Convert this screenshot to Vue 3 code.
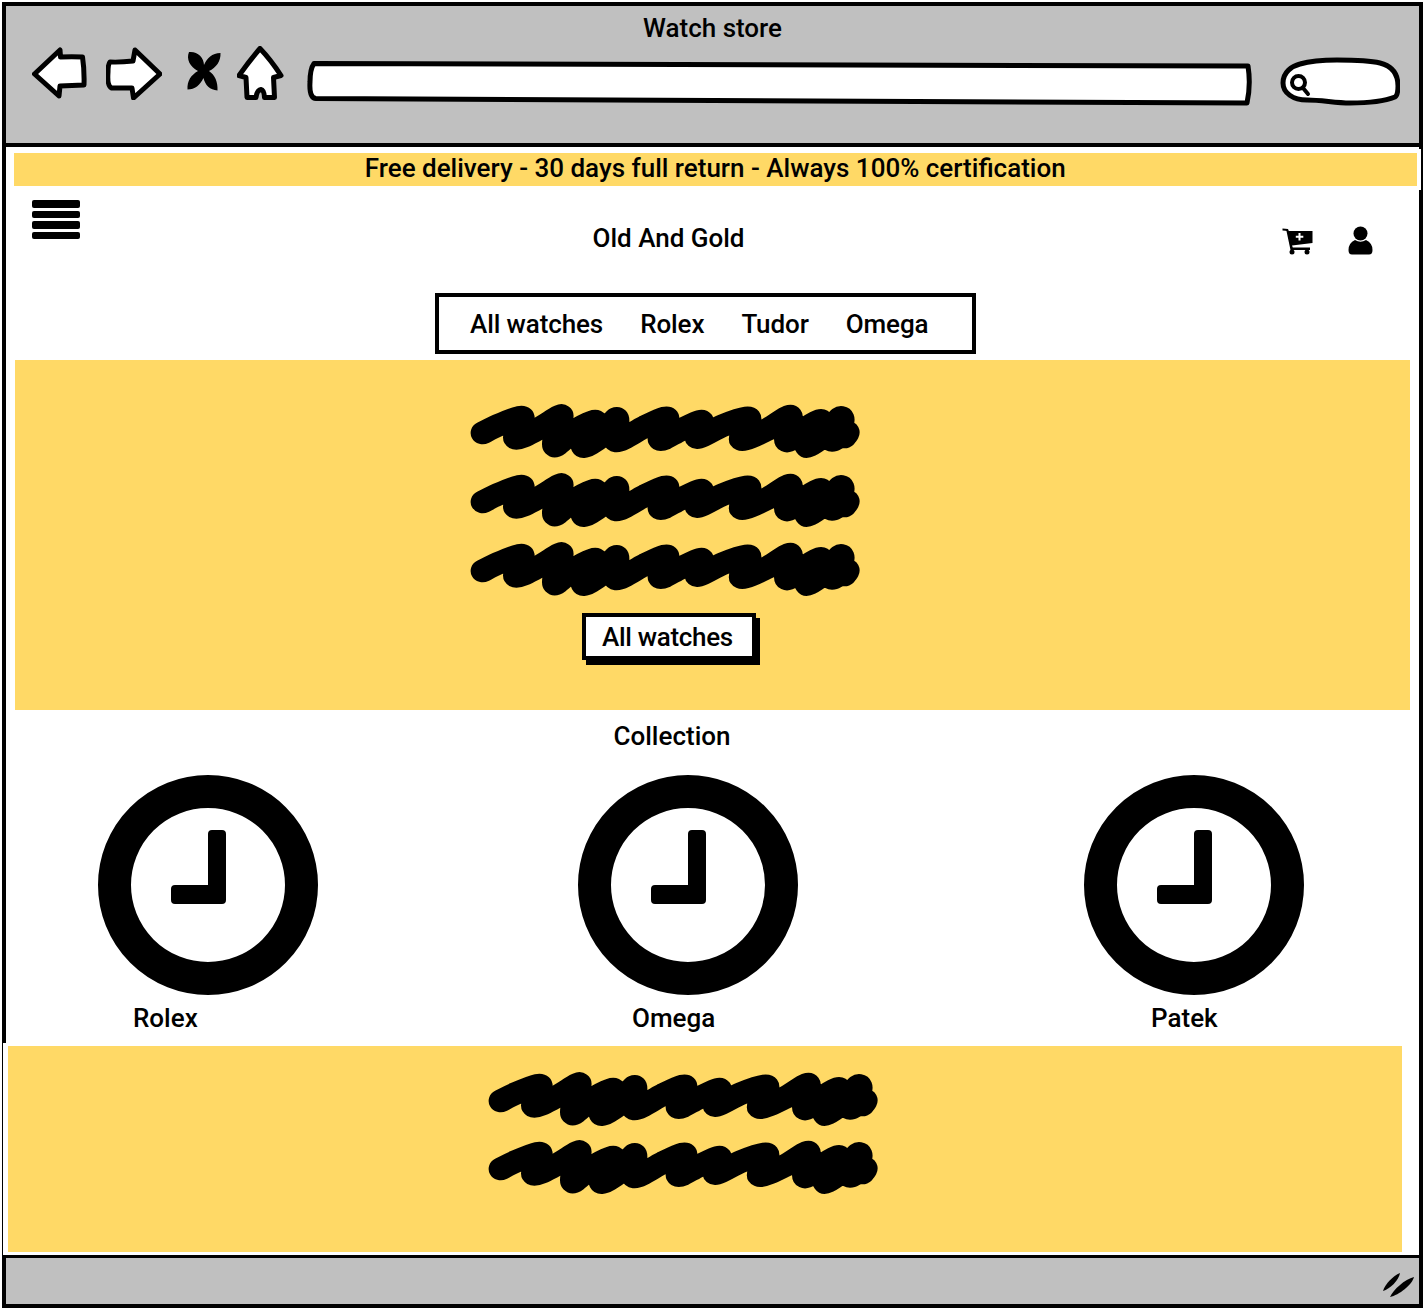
<template>
  <div class="window">
    <header class="titlebar">
      <p class="title">Watch store</p>
      <div class="toolbar">
        <svg class="tool back" viewBox="32 47 55 52">
          <path class="ink" d="M34.500 74 L60 50 L60.500 57 Q72 56.500 82.500 57 Q84.500 70 84 85 L60 86 L59 96 Z" />
        </svg>
        <svg class="tool forward" viewBox="106 47 56 53">
          <path class="ink" d="M110 62 Q120 62.500 133 61 L135 50 L160 74 L133.500 98 L132 88 L111.500 88 Q107 86 108 72 Q108 64 110 62 Z" />
        </svg>
        <svg class="tool close" viewBox="186 50 36 41">
          <path d="M189 52 C197 51 204 57 204 65 C207 58 212 53 220.500 53 C221 61 216 68 209 71 C215 75 218 82 217.500 90.500 C210 90 205 85 203.500 78 C200 85 195 89.500 187.500 89.500 C187 81 191 75 198 71 C190 67 186 59 189 52 Z" />
        </svg>
        <svg class="tool home" viewBox="237 46 47 54">
          <path class="ink" d="M260 48.500 Q271 60 281 75.500 L273.500 77.500 L274.500 97.500 L264.500 97.500 Q264 90 261 89.500 Q257 90 256 97.500 L247 97.500 L246 77.500 L239 75.500 Q250 60 260 48.500 Z" />
        </svg>
        <svg class="address" viewBox="307 60 946 46">
          <path class="ink" d="M314 63.500 L1248 66 Q1251 85 1247 103 L316 98.500 Q309 98 310 82 Q310 69 314 63.500 Z" />
        </svg>
        <svg class="search" viewBox="1280 57 120 50">
          <path class="ink" d="M1283 83 C1283 72 1292 66 1300 64 C1312 60.500 1325 60 1337 60 C1355 60 1368 60 1380 63 C1392 66 1398 74 1398 86 Q1398 95 1395 97 C1385 101 1370 103 1350 103 C1335 103 1322 100 1307 100 C1293 100 1283 93 1283 83 Z" />
          <circle class="lens" cx="1298.500" cy="82.500" r="6.500" />
          <path class="lens" d="M1303 88 L1308 94" />
        </svg>
      </div>
    </header>

    <main class="page">
      <div class="promo">Free delivery - 30 days full return - Always 100% certification</div>

      <div class="shop-head">
        <div class="burger">
          <span v-for="n in 4" :key="n"></span>
        </div>
        <p class="brand">Old And Gold</p>
        <svg class="cart" viewBox="1283 228 31 27">
          <path d="M1283.500 228.500 L1289 229 L1289.800 231 L1313.500 231 L1313.500 243 L1293 245.500 L1293.800 247.500 L1311 247.500 L1311 250 L1291.500 250 L1287.500 231 Q1287.500 230.500 1283.500 230.500 Z" />
          <circle cx="1293" cy="252" r="2.500" />
          <circle cx="1308" cy="252" r="2.500" />
          <path class="plus" d="M1300.500 233 L1300.500 240.500 M1296.800 236.800 L1304.300 236.800" />
        </svg>
        <svg class="user" viewBox="1349 226 25 29">
          <circle cx="1361.500" cy="233.500" r="7" />
          <path d="M1356 240 Q1361.500 243.500 1367 240 Q1373.500 243 1373.500 250 Q1373.500 254.500 1370 254.500 L1353 254.500 Q1349.500 254.500 1349.500 250 Q1349.500 243 1356 240 Z" />
        </svg>
      </div>

      <nav class="menu">
        <a v-for="item in menu" :key="item">{{ item }}</a>
      </nav>

      <section class="hero">
        <svg v-for="n in 3" :key="n" class="scribble" viewBox="115 375 1085 158" preserveAspectRatio="none">
          <path :d="scribblePath" />
        </svg>
        <button class="hero-btn">All watches</button>
      </section>

      <h2 class="collection-title">Collection</h2>
      <div class="collection">
        <div v-for="watch in watches" :key="watch.name" class="watch" :class="watch.cls">
          <svg class="clock" viewBox="0 0 220 220">
            <circle class="dial" cx="110" cy="110" r="93.500" />
            <path d="M114 55 L124 55 Q128 55 128 59 L128 125 Q128 129 124 129 L77 129 Q73 129 73 125 L73 114 Q73 110 77 110 L110 110 L110 59 Q110 55 114 55 Z" />
          </svg>
          <span class="watch-name">{{ watch.name }}</span>
        </div>
      </div>

      <section class="footer-band">
        <svg v-for="n in 2" :key="n" class="scribble" viewBox="115 375 1085 158" preserveAspectRatio="none">
          <path :d="scribblePath" />
        </svg>
      </section>
    </main>

    <footer class="statusbar">
      <svg class="grip" viewBox="1382 1272 33 26">
        <path d="M1383 1291 C1385 1284 1393 1276 1400 1273 C1399 1280 1390 1289 1383 1291 Z" />
        <path d="M1390 1297 C1393 1290 1405 1279 1414 1277 C1412 1285 1399 1295 1390 1297 Z" />
      </svg>
    </footer>
  </div>
</template>

<script setup>
const menu = ['All watches', 'Rolex', 'Tudor', 'Omega']

const watches = [
  { name: 'Rolex', cls: 'rolex' },
  { name: 'Omega', cls: 'omega' },
  { name: 'Patek', cls: 'patek' },
]

// pen line of the scribble placeholder, zigzag with a thick round stroke
const scribblePts = [
  [148, 458], [190, 436], [250, 412], [258, 422], [240, 474], [300, 448], [360, 410], [366, 418], [348, 496],
  [400, 455], [452, 426], [462, 432], [428, 498], [480, 468], [518, 418], [524, 428], [522, 482], [600, 440],
  [656, 414], [662, 424], [644, 478], [700, 450], [754, 424], [760, 434], [748, 472], [820, 436], [884, 414],
  [892, 426], [872, 478], [940, 450], [1002, 410], [1008, 424], [998, 482], [1050, 445], [1088, 422], [1092, 434],
  [1054, 498], [1110, 460], [1146, 414], [1152, 428], [1124, 480], [1166, 456], [1160, 470],
]

const smooth = (pts) => {
  let d = `M${pts[0][0]} ${pts[0][1]}`
  for (let i = 0; i < pts.length - 1; i++) {
    const p0 = pts[Math.max(i - 1, 0)]
    const p1 = pts[i]
    const p2 = pts[i + 1]
    const p3 = pts[Math.min(i + 2, pts.length - 1)]
    const c1 = [p1[0] + (p2[0] - p0[0]) / 6, p1[1] + (p2[1] - p0[1]) / 6]
    const c2 = [p2[0] - (p3[0] - p1[0]) / 6, p2[1] - (p3[1] - p1[1]) / 6]
    d += ` C${c1[0]} ${c1[1]} ${c2[0]} ${c2[1]} ${p2[0]} ${p2[1]}`
  }
  return d
}

const scribblePath = smooth(scribblePts)
</script>

<style>
html,
body {
  margin: 0;
  background: #fff;
}
</style>

<style scoped>
.window {
  box-sizing: border-box;
  display: flex;
  flex-direction: column;
  width: 1421px;
  height: 1306px;
  margin: 2px 0 0 2px;
  border: 4px solid #000;
  font-family: Roboto, "Liberation Sans", sans-serif;
  font-size: 26px;
  font-weight: 500;
  color: #000;
}

.titlebar {
  box-sizing: border-box;
  height: 141px;
  flex: none;
  background: #c0c0c0;
  border-bottom: 4px solid #000;
}

.title {
  margin: 6px 0 0;
  height: 32px;
  line-height: 32px;
  text-align: center;
}

.toolbar {
  display: flex;
  align-items: flex-start;
  padding: 3px 0 0 26px;
}

.tool {
  flex: none;
}

.back {
  width: 55px;
  height: 52px;
}

.forward {
  width: 56px;
  height: 53px;
  margin-left: 19px;
}

.close {
  width: 36px;
  height: 41px;
  margin: 3px 0 0 24px;
}

.home {
  width: 47px;
  height: 54px;
  margin: -1px 0 0 15px;
}

.address {
  width: 946px;
  height: 46px;
  margin: 13px 0 0 23px;
  flex: none;
}

.search {
  width: 120px;
  height: 50px;
  margin: 10px 0 0 27px;
  flex: none;
}

.ink {
  fill: #fff;
  stroke: #000;
  stroke-width: 5;
  stroke-linejoin: round;
}

.lens {
  fill: none;
  stroke: #000;
  stroke-width: 4;
  stroke-linecap: round;
}

.page {
  flex: 1;
  min-height: 0;
  background: #fff;
}

.promo {
  position: relative;
  height: 33px;
  margin: 6px 2px 0 7.5px;
  line-height: 30px;
  text-align: center;
  background: #ffd966;
  box-shadow: 0 0 0 4px #fff;
}

.shop-head {
  display: flex;
  align-items: flex-start;
  height: 107px;
  padding: 0 46px 0 26px;
}

.burger {
  display: flex;
  flex-direction: column;
  gap: 3px;
  width: 48px;
  margin-top: 14px;
  flex: none;
}

.burger span {
  height: 7.5px;
  background: #000;
  border-radius: 2px;
}

.brand {
  flex: 1;
  margin: 36px 0 0;
  line-height: 32px;
  text-align: center;
}

.cart {
  width: 31px;
  height: 27px;
  margin: 42px 0 0 25px;
  flex: none;
}

.plus {
  fill: none;
  stroke: #fff;
  stroke-width: 2;
}

.user {
  width: 25px;
  height: 29px;
  margin: 40px 0 0 35px;
  flex: none;
}

.menu {
  box-sizing: border-box;
  display: flex;
  gap: 37px;
  align-items: center;
  width: 541px;
  height: 61px;
  margin-left: 429px;
  padding-left: 31px;
  border: 4px solid #000;
  letter-spacing: -0.1px;
}

.hero {
  display: flex;
  flex-direction: column;
  align-items: flex-start;
  gap: 16px;
  box-sizing: border-box;
  width: 1395px;
  height: 350px;
  margin: 6px 0 0 9px;
  padding: 45px 0 0 456px;
  background: #ffd966;
}

.scribble {
  width: 388px;
  height: 53px;
  flex: none;
  overflow: visible;
}

.scribble path {
  fill: none;
  stroke: #000;
  stroke-width: 68;
  stroke-linecap: round;
  stroke-linejoin: round;
}

.hero-btn {
  box-sizing: border-box;
  width: 174px;
  height: 47px;
  margin: 1px 0 0 111px;
  padding: 0 0 0 16px;
  border: 4px solid #000;
  box-shadow: 4px 5px 0 #000;
  background: #fff;
  font: inherit;
  letter-spacing: -0.3px;
  text-align: left;
  color: #000;
}

.collection-title {
  margin: 0;
  padding-right: 81px;
  height: 52px;
  line-height: 52px;
  font-size: 26px;
  font-weight: 500;
  text-align: center;
}

.collection {
  display: grid;
  grid-template-columns: 480px 506px 220px;
  margin-top: 13px;
  padding-left: 92px;
}

.watch {
  display: flex;
  flex-direction: column;
  width: 220px;
}

.clock {
  display: block;
  width: 220px;
  height: 220px;
}

.dial {
  fill: #fff;
  stroke: #000;
  stroke-width: 33;
}

.watch-name {
  margin-top: 7px;
  line-height: 32px;
}

.rolex .watch-name {
  padding-left: 35px;
}

.omega .watch-name {
  padding-left: 54px;
}

.patek .watch-name {
  padding-left: 67px;
}

.footer-band {
  position: relative;
  display: flex;
  flex-direction: column;
  gap: 15px;
  box-sizing: border-box;
  width: 1394px;
  height: 206px;
  margin: 12px 0 0 2px;
  padding: 27px 0 0 481px;
  background: #ffd966;
  box-shadow: 0 0 0 3px #fff, -2px 0 0 3px #fff;
}

.statusbar {
  box-sizing: border-box;
  display: flex;
  justify-content: flex-end;
  align-items: flex-start;
  height: 49px;
  flex: none;
  padding: 14px 4px 0 0;
  background: #c0c0c0;
  border-top: 3px solid #000;
}

.grip {
  width: 33px;
  height: 26px;
}
</style>
